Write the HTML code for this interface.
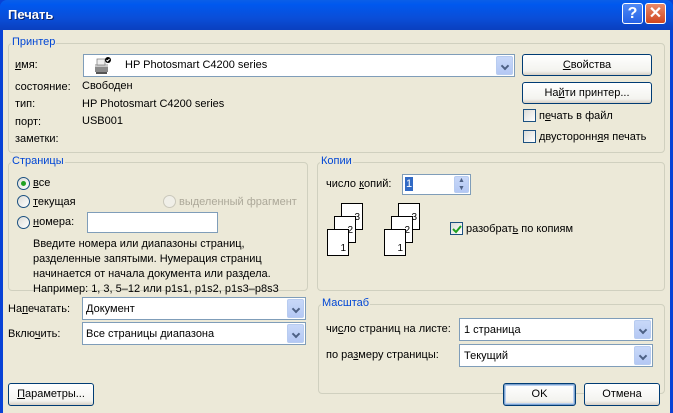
<!DOCTYPE html>
<html><head><meta charset="utf-8"><style>
*{box-sizing:border-box;margin:0;padding:0}
body{width:673px;height:413px;overflow:hidden;background:#0842d6;font-family:"Liberation Sans",Tahoma,sans-serif;font-size:11px;color:#000;position:relative}
.abs{position:absolute}
#title{left:0;top:0;width:673px;height:30px;background:linear-gradient(#0a5fe8,#0058ee 15%,#0a4ed8 60%,#0a3fbf);border-radius:7px 7px 0 0}
#title span{position:absolute;left:8px;top:7px;color:#fff;font-weight:bold;font-size:13px;text-shadow:1px 1px #0a246a}
#body{left:3px;top:30px;width:667px;height:383px;background:#ece9d8}
.tb{width:21px;height:21px;border:1px solid #fff;border-radius:3px;color:#fff;font-weight:bold;font-size:16px;text-align:center;line-height:19px}
.grp{border:1px solid #d0d0bf;border-radius:4px}
.gl{color:#0046d5;background:#ece9d8;padding:0 1px}
.t{white-space:nowrap}
.combo{background:#fff;border:1px solid #7f9db9}
.arr{position:absolute;right:1px;top:1px;bottom:1px;width:17px;background:linear-gradient(#c8d8f8,#b4c8f4);border:1px solid #b8ccf0;border-radius:2px}
.arr:after{content:"";position:absolute;left:5px;top:6px;width:4px;height:4px;border-right:2px solid #4d6185;border-bottom:2px solid #4d6185;transform:rotate(45deg)}
.btn{border:1px solid #003c74;border-radius:3px;background:linear-gradient(#fff,#f3f3ef 80%,#d6d0c5);text-align:center}
.cb{width:13px;height:13px;border:1px solid #1c5180;background:linear-gradient(135deg,#dcdcd7,#fff)}
.rd{width:13px;height:13px;border:1px solid #1c5180;border-radius:50%;background:linear-gradient(135deg,#dcdcd7,#fff)}
.pg{width:22px;height:27px;background:#fff;border:1px solid #000;font-size:10px}
.pg b{position:absolute;right:2px;font-weight:normal;line-height:10px}
u{text-decoration:underline}
</style></head><body>
<div id="title" class="abs"><span>Печать</span>
<div class="abs tb" style="left:622px;top:3px;background:linear-gradient(#4f8af5,#2662e6)">?</div>
<div class="abs tb" style="left:645px;top:3px;background:linear-gradient(#e88a6a,#d0461f)">✕</div>
</div>
<div id="body" class="abs"></div>

<div class="abs grp" style="left:8px;top:43px;width:657px;height:110px"></div>
<div class="abs gl t" style="left:11px;top:36px">Принтер</div>
<div class="abs t" style="left:15px;top:59px"><u>и</u>мя:</div>
<div class="abs combo" style="left:83px;top:54px;width:432px;height:23px">
<svg class="abs" style="left:8px;top:2px" width="20" height="18" viewBox="0 0 20 18"><rect x="3" y="7" width="13" height="8" fill="#8a8a8a"/><rect x="3" y="7" width="13" height="3" fill="#c8c8c8"/><rect x="5" y="2" width="8" height="6" fill="#eee" stroke="#777" stroke-width=".7"/><rect x="4" y="15" width="11" height="2" fill="#555"/><circle cx="16" cy="3" r="3" fill="#000"/><path d="M14.5 3l1 1 2-2" stroke="#fff" fill="none"/></svg>
<div class="abs t" style="left:41px;top:4px">HP Photosmart C4200 series</div><div class="arr"></div></div>
<div class="abs t" style="left:15px;top:81px">состояние:</div>
<div class="abs t" style="left:82px;top:80px">Свободен</div>
<div class="abs t" style="left:15px;top:98px">тип:</div>
<div class="abs t" style="left:82px;top:98px">HP Photosmart C4200 series</div>
<div class="abs t" style="left:15px;top:116px">порт:</div>
<div class="abs t" style="left:82px;top:115px">USB001</div>
<div class="abs t" style="left:15px;top:133px">заметки:</div>
<div class="abs btn" style="left:522px;top:54px;width:130px;height:22px;line-height:20px"><u>С</u>войства</div>
<div class="abs btn" style="left:522px;top:82px;width:130px;height:22px;line-height:20px">На<u>й</u>ти принтер...</div>
<div class="abs cb" style="left:523px;top:109px"></div>
<div class="abs t" style="left:539px;top:110px">п<u>е</u>чать в файл</div>
<div class="abs cb" style="left:523px;top:130px"></div>
<div class="abs t" style="left:539px;top:131px">двусторонн<u>я</u>я печать</div>

<div class="abs grp" style="left:8px;top:162px;width:300px;height:129px"></div>
<div class="abs gl t" style="left:11px;top:155px">Страницы</div>
<div class="abs rd" style="left:17px;top:177px"><div class="abs" style="left:3px;top:3px;width:5px;height:5px;border-radius:50%;background:#21a121"></div></div>
<div class="abs t" style="left:33px;top:177px"><u>в</u>се</div>
<div class="abs rd" style="left:17px;top:195px"></div>
<div class="abs t" style="left:33px;top:196px"><u>т</u>екущая</div>
<div class="abs rd" style="left:163px;top:195px;border-color:#cac8bb;background:#f0efe8"></div>
<div class="abs t" style="left:179px;top:196px;color:#aca899">выделенный фрагмент</div>
<div class="abs rd" style="left:17px;top:216px"></div>
<div class="abs t" style="left:33px;top:216px"><u>н</u>омера:</div>
<div class="abs combo" style="left:87px;top:212px;width:131px;height:21px"></div>
<div class="abs" style="left:33px;top:237px;line-height:15px;white-space:nowrap">Введите номера или диапазоны страниц,<br>разделенные запятыми. Нумерация страниц<br>начинается от начала документа или раздела.<br>Например: 1, 3, 5–12 или p1s1, p1s2, p1s3–p8s3</div>

<div class="abs grp" style="left:317px;top:162px;width:348px;height:129px"></div>
<div class="abs gl t" style="left:320px;top:155px">Копии</div>
<div class="abs t" style="left:326px;top:178px">число <u>к</u>опий:</div>
<div class="abs combo" style="left:402px;top:174px;width:69px;height:21px">
<div class="abs" style="left:2px;top:2px;background:#316ac5;color:#fff;padding:0 1px;line-height:14px">1</div>
<div class="abs" style="right:1px;top:1px;bottom:1px;width:15px;background:linear-gradient(#c8d8f8,#b4c8f4);border:1px solid #b8ccf0;border-radius:2px;font-size:7px;color:#4d6185;text-align:center;line-height:8px">▲<br>▼</div></div>
<div class="abs pg" style="left:341px;top:203px"><b style="top:9px">3</b></div>
<div class="abs pg" style="left:334px;top:216px"><b style="top:9px">2</b></div>
<div class="abs pg" style="left:327px;top:229px"><b style="top:14px">1</b></div>
<div class="abs pg" style="left:398px;top:203px"><b style="top:9px">3</b></div>
<div class="abs pg" style="left:391px;top:216px"><b style="top:9px">2</b></div>
<div class="abs pg" style="left:384px;top:229px"><b style="top:14px">1</b></div>
<div class="abs cb" style="left:450px;top:222px"><svg class="abs" style="left:1px;top:1px" width="10" height="10"><path d="M1 5l3 3 5-6" stroke="#21a121" stroke-width="2" fill="none"/></svg></div>
<div class="abs t" style="left:466px;top:223px">разобрат<u>ь</u> по копиям</div>

<div class="abs t" style="left:8px;top:303px">На<u>п</u>ечатать:</div>
<div class="abs combo" style="left:82px;top:297px;width:224px;height:23px"><div class="abs t" style="left:3px;top:5px">Документ</div><div class="arr"></div></div>
<div class="abs t" style="left:8px;top:328px">Вклю<u>ч</u>ить:</div>
<div class="abs combo" style="left:82px;top:322px;width:224px;height:23px"><div class="abs t" style="left:3px;top:5px">Все страницы диапазона</div><div class="arr"></div></div>

<div class="abs grp" style="left:318px;top:304px;width:347px;height:90px"></div>
<div class="abs gl t" style="left:321px;top:297px">Масштаб</div>
<div class="abs t" style="left:326px;top:323px">чи<u>с</u>ло страниц на листе:</div>
<div class="abs combo" style="left:459px;top:318px;width:194px;height:23px"><div class="abs t" style="left:4px;top:5px">1 страница</div><div class="arr"></div></div>
<div class="abs t" style="left:326px;top:349px">по ра<u>з</u>меру страницы:</div>
<div class="abs combo" style="left:459px;top:344px;width:194px;height:23px"><div class="abs t" style="left:4px;top:5px">Текущий</div><div class="arr"></div></div>

<div class="abs btn" style="left:8px;top:383px;width:86px;height:23px;line-height:21px"><u>П</u>араметры...</div>
<div class="abs btn" style="left:503px;top:383px;width:73px;height:23px;line-height:21px;box-shadow:inset 0 0 0 1px #7da2ce,inset 0 0 0 2px #b8d0f0">OK</div>
<div class="abs btn" style="left:584px;top:383px;width:76px;height:23px;line-height:21px">Отмена</div>
</body></html>
